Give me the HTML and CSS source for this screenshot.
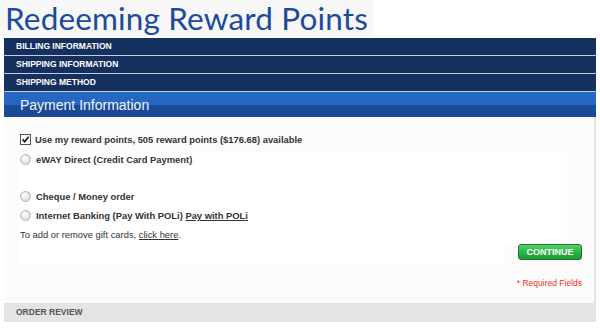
FILE: index.html
```html
<!DOCTYPE html>
<html>
<head>
<meta charset="utf-8">
<link rel="stylesheet" href="styles.css">
</head>
<body>
<div class="title-wrap"><h1 class="title">Redeeming Reward Points</h1></div>
<div class="page">
  <div class="step">BILLING INFORMATION</div>
  <div class="step">SHIPPING INFORMATION</div>
  <div class="step">SHIPPING METHOD</div>
  <div class="step-active">Payment Information</div>
  <div class="content">
    <div class="row reward"><span class="check"><svg viewBox="0 0 9 9" width="9" height="9"><path d="M1.6 4.4 L3.7 6.8 L7.6 1.8" fill="none" stroke="#111" stroke-width="1.6"/></svg></span><span>Use my reward points, 505 reward points ($176.68) available</span></div>
    <div class="methods">
      <div class="row method first"><span class="radio"></span><span>eWAY Direct (Credit Card Payment)</span></div>
      <div class="spacer"></div>
      <div class="row method"><span class="radio"></span><span>Cheque / Money order</span></div>
      <div class="row method"><span class="radio"></span><span>Internet Banking (Pay With POLi) <a class="link" href="#">Pay with POLi</a></span></div>
      <div class="gift"><span>To add or remove gift cards, <a class="link" href="#">click here</a>.</span></div>
    </div>
    <div class="actions">
      <div class="methods-tail"></div>
      <button class="continue">CONTINUE</button>
    </div>
    <div class="required">* Required Fields</div>
  </div>
  <div class="step-closed">ORDER REVIEW</div>
</div>
</body>
</html>
```
FILE: styles.css
```css
html, body { margin: 0; padding: 0; background: #fff; }
body { font-family: "Liberation Sans", Arial, sans-serif; color: #333; }
.title-wrap { display: flex; }
.title {
  margin: 0; padding: 0 5px 0 5px;
  background: #f7f7f7; color: #1d4b9b;
  font-family: Lato, sans-serif; font-weight: 400; font-size: 31.5px; line-height: 36px;
  letter-spacing: 0.15px;
}
.page { padding: 2px 4px 0 4px; }
.step {
  height: 17px; line-height: 17px; background: #14305e; color: #fff;
  font-size: 8.5px; font-weight: bold; padding-left: 12px;
  border-bottom: 1px solid #c7ccd6;
}
.step-active {
  height: 25px; line-height: 26px; color: #f0f4ff; font-size: 14px; padding-left: 16px;
  background: linear-gradient(#2667c1 0, #2667c1 13px, #1b4a95 13px, #1b4a95 100%);
}
.content {
  background: #fbfbfb; border-right: 2px solid #e2e2e2;
  padding: 13px 0 10px 0;
}
.row { display: flex; align-items: center; font-size: 9.4px; line-height: 19px; }
.reward { padding-left: 16px; font-weight: bold; gap: 4px; }
.check {
  width: 9px; height: 9px; border: 1px solid #555; background: #fff; display: flex;
}
.check svg { width: 9px; height: 9px; }
.methods {
  background: #fff; width: 549px; margin: 3px 0 0 14px;
}
.method { font-weight: bold; padding-left: 2px; gap: 5px; }
.method.first { line-height: 15px; }
.spacer { height: 20px; }
.radio {
  width: 11px; height: 11px; border-radius: 50%; box-sizing: border-box;
  border: 1px solid #b3b3b3; background: radial-gradient(circle at 40% 35%, #fff 0, #e8e8e8 50%, #cdcdcd 100%);
}
.gift { padding-left: 2px; font-size: 9.4px; line-height: 19px; }
.link { color: #333; text-decoration: underline; }
.actions { display: flex; align-items: flex-start; justify-content: space-between; margin-left: 14px; height: 20px; padding-right: 12px; }
.methods-tail { width: 487px; height: 20px; background: #fff; }
.continue {
  width: 64px; height: 16px; padding: 0; border: 1px solid #1b7a2c; border-radius: 3px;
  background: linear-gradient(#4fd465 0, #2db446 50%, #1f9a36 100%);
  color: #fff; font-family: "Liberation Sans", Arial, sans-serif; font-weight: bold; font-size: 9px;
  line-height: 14px;
}
.required { text-align: right; padding-right: 12px; color: #f0302a; font-size: 8.5px; line-height: 19px; margin-top: 10px; }
.step-closed {
  height: 19px; line-height: 19px; background: #e4e4e4; color: #555;
  font-size: 8.5px; font-weight: bold; padding-left: 12px;
}
```
